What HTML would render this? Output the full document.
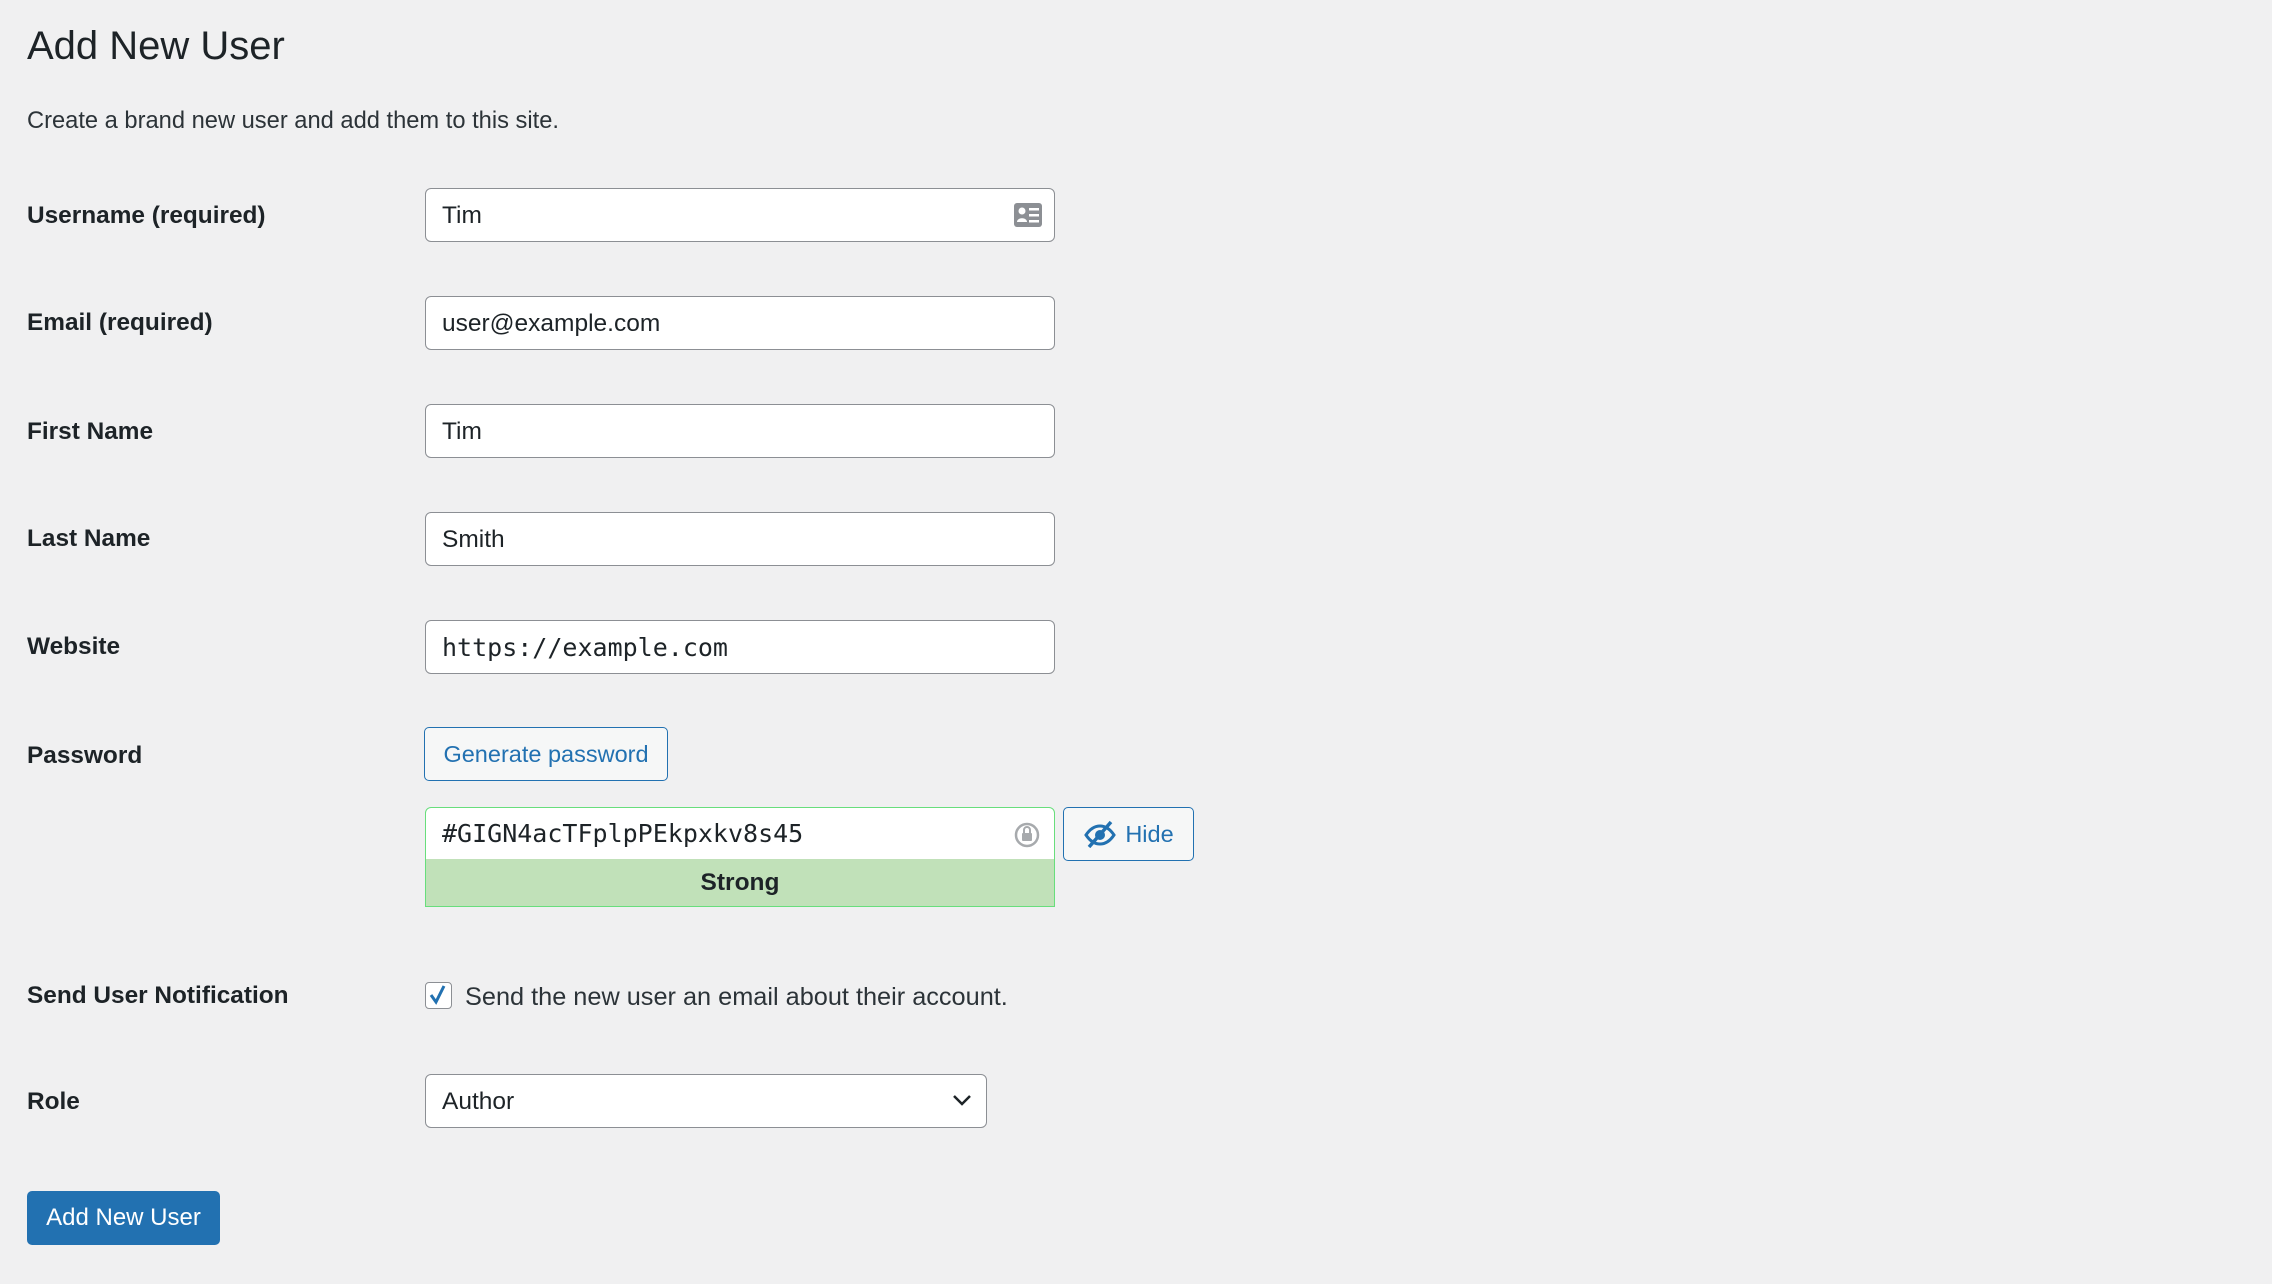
<!DOCTYPE html>
<html><head><meta charset="utf-8"><style>
*{box-sizing:border-box;margin:0;padding:0}
body{width:2272px;height:1284px;background:#f0f0f1;font-family:"Liberation Sans",sans-serif;color:#1d2327;position:relative;overflow:hidden}
.a{position:absolute}
h1{position:absolute;left:27px;top:21px;font-size:40px;font-weight:400;line-height:50px}
.sub{left:27px;top:107px;font-size:23.7px;line-height:28px;color:#2c3338}
.lbl{left:27px;font-size:24.4px;font-weight:700;line-height:30px;transform:translateY(-50%)}
.inp{left:425px;width:630px;height:54px;background:#fff;border:1.5px solid #8c8f94;border-radius:6px;font-size:24.5px;line-height:53px;padding-left:16px}
.btn{border:1.5px solid #2271b1;border-radius:5px;background:#f6f7f7;color:#2271b1;font-size:23.5px;display:flex;align-items:center;justify-content:center}
.mono{font-family:"DejaVu Sans Mono","Liberation Mono",monospace;font-size:25px}
</style></head><body>
<h1>Add New User</h1>
<div class="a sub">Create a brand new user and add them to this site.</div>

<div class="a lbl" style="top:216px">Username (required)</div>
<div class="a inp" style="top:188px">Tim
<svg class="a" style="right:12px;top:14px" width="28" height="24" viewBox="0 0 28 24"><rect x="0" y="0" width="28" height="24" rx="3" fill="#8c8f94"/><circle cx="8" cy="8" r="3.5" fill="#fff"/><path d="M3 19c0-5 10-5 10 0z" fill="#fff"/><rect x="15" y="5" width="10" height="2.5" fill="#fff"/><rect x="15" y="11" width="10" height="2.5" fill="#fff"/><rect x="15" y="17" width="10" height="2.5" fill="#fff"/></svg></div>

<div class="a lbl" style="top:323px">Email (required)</div>
<div class="a inp" style="top:296px">user@example.com</div>

<div class="a lbl" style="top:432px">First Name</div>
<div class="a inp" style="top:404px">Tim</div>

<div class="a lbl" style="top:539px">Last Name</div>
<div class="a inp" style="top:512px">Smith</div>

<div class="a lbl" style="top:647px">Website</div>
<div class="a inp mono" style="top:620px">https://example.com</div>

<div class="a lbl" style="top:756px">Password</div>
<div class="a btn" style="left:424px;top:727px;width:244px;height:54px">Generate password</div>

<div class="a inp mono" style="top:807px;height:53px;border-color:#68de7c;border-radius:6px 6px 0 0;line-height:51px">#GIGN4acTFplpPEkpxkv8s45
<svg class="a" style="right:14px;top:13px" width="26" height="28" viewBox="0 0 26 28"><circle cx="13" cy="14" r="11" fill="none" stroke="#a7aaad" stroke-width="2.5"/><rect x="8" y="12" width="10" height="8" rx="1" fill="#a7aaad"/><path d="M10 12v-3a3 3 0 0 1 6 0v3" fill="none" stroke="#a7aaad" stroke-width="2"/></svg></div>
<div class="a" style="left:425px;top:859px;width:630px;height:48px;background:#c1e1b9;border:1.5px solid #68de7c;border-top:none;font-size:24.5px;font-weight:700;text-align:center;line-height:48px">Strong</div>
<div class="a btn" style="left:1063px;top:807px;width:131px;height:54px;gap:8px"><svg width="34" height="28" viewBox="0 0 34 28"><path d="M3 15c4-6 9-9 14-9s10 3 14 9c-4 6-9 9-14 9s-10-3-14-9z" fill="none" stroke="#2271b1" stroke-width="3"/><circle cx="17" cy="15" r="5" fill="#2271b1"/><path d="M6 27L28 2" stroke="#2271b1" stroke-width="3.5"/></svg>Hide</div>

<div class="a lbl" style="top:996px">Send User Notification</div>
<div class="a" style="left:425px;top:982px;width:27px;height:27px;background:#fff;border:1.5px solid #8c8f94;border-radius:4px"><svg width="24" height="24" viewBox="0 0 24 24"><path d="M5 12l5 7L18 3" fill="none" stroke="#2271b1" stroke-width="3"/></svg></div>
<div class="a" style="left:465px;top:982px;font-size:25.3px;line-height:30px;color:#2c3338">Send the new user an email about their account.</div>

<div class="a lbl" style="top:1102px">Role</div>
<div class="a inp" style="top:1074px;width:562px">Author
<svg class="a" style="right:14px;top:18px" width="20" height="14" viewBox="0 0 20 14"><path d="M2 3l8 8 8-8" fill="none" stroke="#1d2327" stroke-width="2.5"/></svg></div>

<div class="a" style="left:27px;top:1191px;width:193px;height:54px;background:#2271b1;border-radius:5px;color:#fff;font-size:24px;display:flex;align-items:center;justify-content:center">Add New User</div>
</body></html>
